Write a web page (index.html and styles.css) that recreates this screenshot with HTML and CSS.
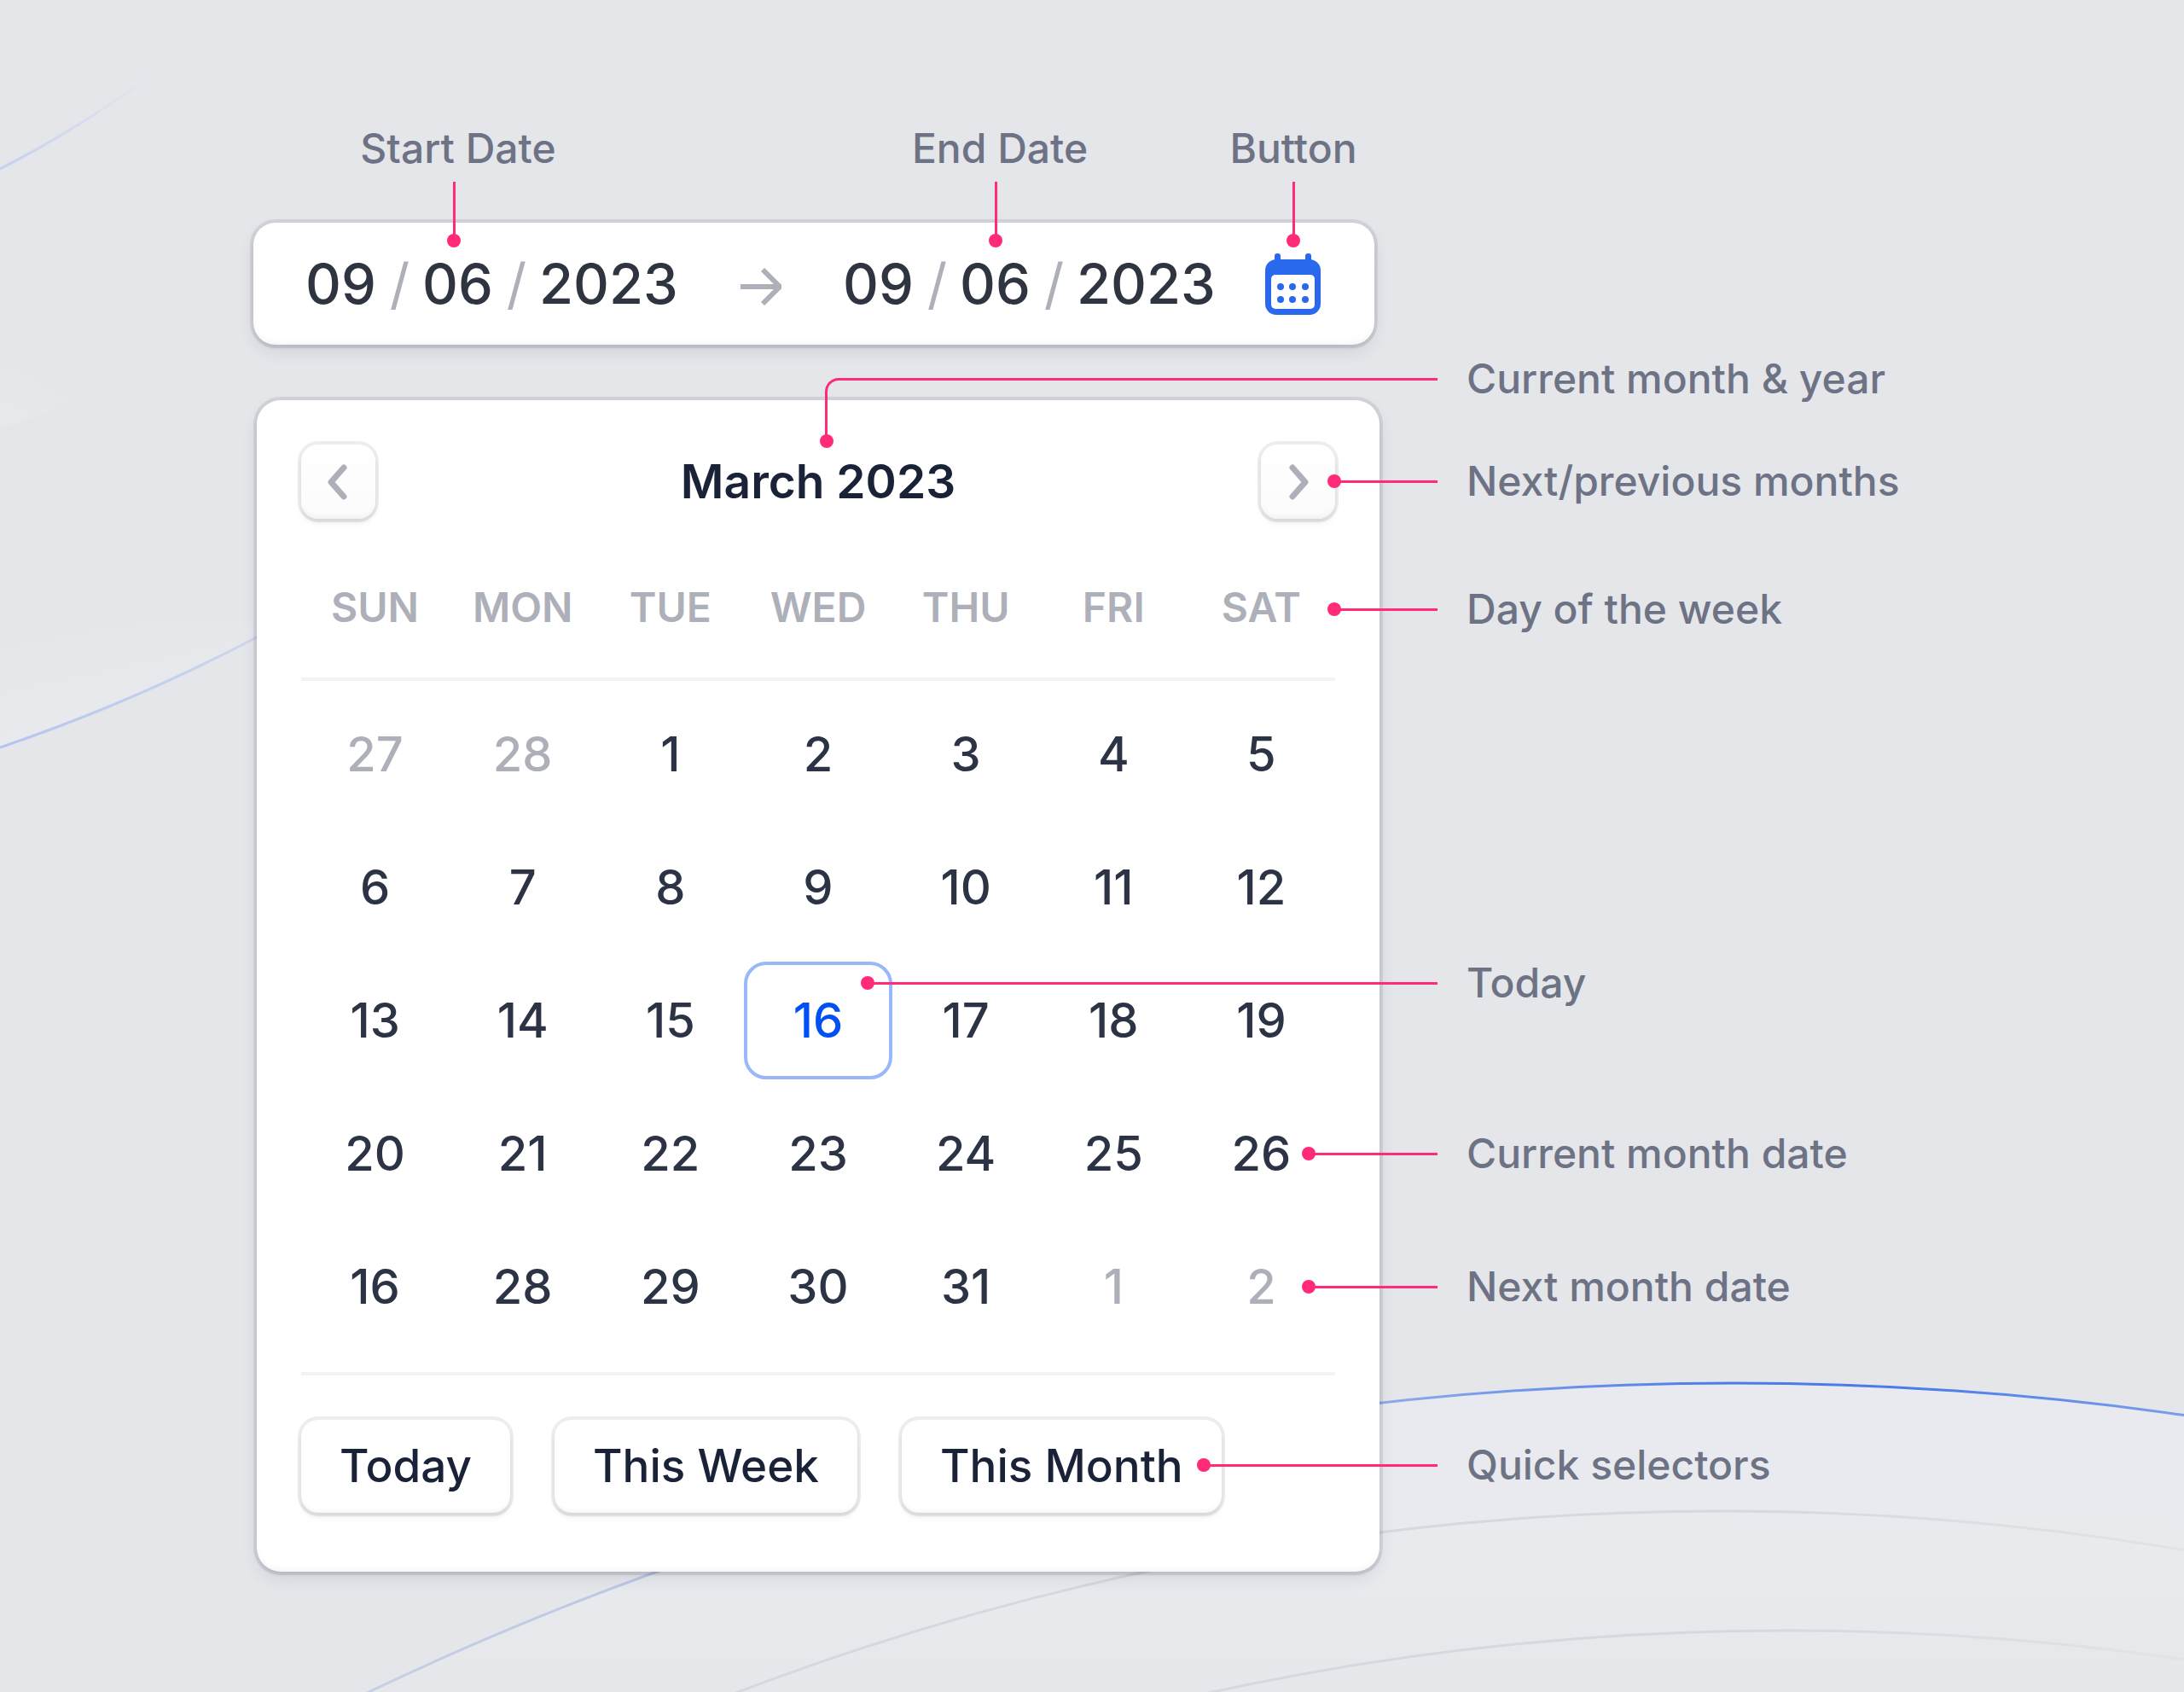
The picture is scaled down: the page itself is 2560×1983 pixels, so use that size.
FILE: index.html
```html
<!DOCTYPE html>
<html lang="en">
<head>
  <meta charset="UTF-8" />
  <meta name="viewport" content="width=device-width, initial-scale=1.0"/>
  <title>Date Range Picker Anatomy</title>
  <link rel="stylesheet" href="styles.css">
</head>
<body>
  <svg class="backdrop" viewBox="0 0 2560 1983" preserveAspectRatio="xMinYMin slice" aria-hidden="true">
    <defs>
      <linearGradient id="arcBlue" gradientUnits="userSpaceOnUse" x1="430" y1="0" x2="2560" y2="0">
        <stop offset="0" stop-color="#c6cfe4"/>
        <stop offset="0.3" stop-color="#b0bfe4"/>
        <stop offset="0.56" stop-color="#8daaea"/>
        <stop offset="0.75" stop-color="#4a7be8"/>
        <stop offset="0.85" stop-color="#4a7be8"/>
        <stop offset="1" stop-color="#7a9eec"/>
      </linearGradient>
      <linearGradient id="arcGrey" gradientUnits="userSpaceOnUse" x1="860" y1="0" x2="2560" y2="0">
        <stop offset="0" stop-color="#d6d8dd"/>
        <stop offset="0.7" stop-color="#d7d8dd"/>
        <stop offset="1" stop-color="#e2e3e7"/>
      </linearGradient>
      <linearGradient id="arcTop" gradientUnits="userSpaceOnUse" x1="0" y1="0" x2="175" y2="0">
        <stop offset="0" stop-color="#c3d0ee"/>
        <stop offset="1" stop-color="#e4e6ea"/>
      </linearGradient>
      <linearGradient id="arcLeft" gradientUnits="userSpaceOnUse" x1="0" y1="0" x2="310" y2="0">
        <stop offset="0" stop-color="#b3c5ee"/>
        <stop offset="1" stop-color="#ced7ec"/>
      </linearGradient>
      <linearGradient id="leftFill" gradientUnits="userSpaceOnUse" x1="60" y1="730" x2="90" y2="870">
        <stop offset="0" stop-color="#e4e6ea"/>
        <stop offset="1" stop-color="#e8eaee"/>
      </linearGradient>
      <linearGradient id="topFill" gradientUnits="userSpaceOnUse" x1="40" y1="430" x2="0" y2="500">
        <stop offset="0" stop-color="#e4e6ea"/>
        <stop offset="1" stop-color="#e7e9ec"/>
      </linearGradient>
    <linearGradient id="hillFill" gradientUnits="userSpaceOnUse" x1="0" y1="1620" x2="0" y2="1983">
        <stop offset="0" stop-color="#e8eaef"/>
        <stop offset="0.6" stop-color="#e8eaee"/>
        <stop offset="1" stop-color="#e6e7eb"/>
      </linearGradient>
    </defs>
    <path d="M0 430H145Q80 480 0 501Z" fill="url(#topFill)"/>
    <path d="M0 730H300V748Q160 824 0 877Z" fill="url(#leftFill)"/>
    <path d="M0 198Q90 152 175 90" fill="none" stroke="url(#arcTop)" stroke-width="3"/>
    <path d="M0 876Q160 822 310 742" fill="none" stroke="url(#arcLeft)" stroke-width="3"/>
    <circle cx="2033" cy="5341" r="3720" fill="url(#hillFill)" stroke="url(#arcBlue)" stroke-width="3"/>
    <circle cx="2018" cy="5011" r="3240" fill="none" stroke="url(#arcGrey)" stroke-width="3"/>
    <circle cx="2096" cy="5111" r="3200" fill="none" stroke="url(#arcGrey)" stroke-width="3"/>
  </svg>

  <main class="picker">
    <form class="range">
      <fieldset class="date">
        <input class="date-part" type="text" value="09" aria-label="Start day">
        <span class="slash">/</span>
        <input class="date-part" type="text" value="06" aria-label="Start month">
        <span class="slash">/</span>
        <input class="date-part date-year" type="text" value="2023" aria-label="Start year">
      </fieldset>
      <svg class="arrow" viewBox="0 0 48 44" aria-hidden="true">
        <path d="M0 22H44M26 2L46 22L26 42" fill="none" stroke="#adb0b8" stroke-width="6"/>
      </svg>
      <fieldset class="date">
        <input class="date-part" type="text" value="09" aria-label="End day">
        <span class="slash">/</span>
        <input class="date-part" type="text" value="06" aria-label="End month">
        <span class="slash">/</span>
        <input class="date-part date-year" type="text" value="2023" aria-label="End year">
      </fieldset>
      <button class="open-btn" type="button" aria-label="Open calendar">
        <svg viewBox="0 0 65 72" aria-hidden="true">
          <rect x="11" y="0" width="7" height="14" rx="3" fill="#2a68ee"/>
          <rect x="47" y="0" width="7" height="14" rx="3" fill="#2a68ee"/>
          <rect x="0" y="7" width="65" height="65" rx="13" fill="#2a68ee"/>
          <rect x="7" y="25" width="51" height="40" rx="5" fill="#fff"/>
          <g fill="#2a68ee">
            <circle cx="18" cy="39" r="4"/><circle cx="32" cy="39" r="4"/><circle cx="47" cy="39" r="4"/>
            <circle cx="18" cy="54" r="4"/><circle cx="32" cy="54" r="4"/><circle cx="47" cy="54" r="4"/>
          </g>
        </svg>
      </button>
      <div class="pin pin-start"><span>Start Date</span></div>
      <div class="pin pin-end"><span>End Date</span></div>
      <div class="pin pin-button"><span>Button</span></div>
    </form>

    <section class="calendar">
      <header class="month">
        <button class="nav-btn" type="button" aria-label="Previous month">
          <svg viewBox="0 0 24 40" aria-hidden="true"><path d="M18 3L3 20L18 37" /></svg>
        </button>
        <h1>March 2023</h1>
        <button class="nav-btn" type="button" aria-label="Next month">
          <svg viewBox="0 0 24 40" aria-hidden="true"><path d="M6 3L21 20L6 37" /></svg>
        </button>
        <div class="callout callout-month"><span>Current month &amp; year</span></div>
        <div class="callout callout-nav"><span>Next/previous months</span></div>
      </header>

      <table class="days">
        <thead>
          <tr>
            <th>SUN</th><th>MON</th><th>TUE</th><th>WED</th><th>THU</th><th>FRI</th>
            <th>SAT<div class="callout callout-week"><span>Day of the week</span></div></th>
          </tr>
        </thead>
        <tbody>
          <tr>
            <td><button class="day muted">27</button></td>
            <td><button class="day muted">28</button></td>
            <td><button class="day">1</button></td>
            <td><button class="day">2</button></td>
            <td><button class="day">3</button></td>
            <td><button class="day">4</button></td>
            <td><button class="day">5</button></td>
          </tr>
          <tr>
            <td><button class="day">6</button></td>
            <td><button class="day">7</button></td>
            <td><button class="day">8</button></td>
            <td><button class="day">9</button></td>
            <td><button class="day">10</button></td>
            <td><button class="day">11</button></td>
            <td><button class="day">12</button></td>
          </tr>
          <tr>
            <td><button class="day">13</button></td>
            <td><button class="day">14</button></td>
            <td><button class="day">15</button></td>
            <td><button class="day today">16</button></td>
            <td><button class="day">17</button></td>
            <td><button class="day">18</button></td>
            <td><button class="day">19</button><div class="callout callout-today"><span>Today</span></div></td>
          </tr>
          <tr>
            <td><button class="day">20</button></td>
            <td><button class="day">21</button></td>
            <td><button class="day">22</button></td>
            <td><button class="day">23</button></td>
            <td><button class="day">24</button></td>
            <td><button class="day">25</button></td>
            <td><button class="day">26</button><div class="callout callout-date"><span>Current month date</span></div></td>
          </tr>
          <tr>
            <td><button class="day">16</button></td>
            <td><button class="day">28</button></td>
            <td><button class="day">29</button></td>
            <td><button class="day">30</button></td>
            <td><button class="day">31</button></td>
            <td><button class="day muted">1</button></td>
            <td><button class="day muted">2</button><div class="callout callout-date"><span>Next month date</span></div></td>
          </tr>
        </tbody>
      </table>

      <footer class="quick">
        <button class="quick-btn" type="button">Today</button>
        <button class="quick-btn" type="button">This Week</button>
        <button class="quick-btn" type="button">This Month</button>
        <div class="callout callout-quick"><span>Quick selectors</span></div>
      </footer>
    </section>
  </main>
</body>
</html>
```
FILE: styles.css
```css
* {
  margin: 0;
  padding: 0;
  box-sizing: border-box;
  font-family: Inter, sans-serif;
}

body {
  position: relative;
  min-height: 100vh;
  background-color: #e4e6ea;
  overflow-x: hidden;
}

button, input, fieldset {
  border: none;
  background: none;
}

button {
  cursor: pointer;
}

.backdrop {
  position: absolute;
  top: 0;
  left: 0;
  width: 100%;
  height: 100%;
}

.picker {
  position: relative;
  max-width: 1620px;
  padding: 261px 0 100px 297px;
}

/* date range field */
.range {
  position: relative;
  display: flex;
  align-items: center;
  height: 143px;
  margin-right: 9px;
  padding: 0 63px 0 61px;
  border-radius: 26px;
  background: #fff;
  box-shadow: 0 0 0 4px rgba(30, 35, 60, 0.09), 0 4px 4px rgba(30, 35, 60, 0.07), 0 8px 20px rgba(30, 35, 60, 0.09), inset 0 -6px 8px -4px rgba(0, 0, 0, 0.05);
}

.date {
  display: flex;
  align-items: center;
}

.date-part {
  width: 84px;
  font-size: 65px;
  font-weight: 500;
  line-height: 80px;
  color: #2f3441;
}

.date-year {
  width: 164px;
}

.slash {
  width: 53px;
  font-size: 65px;
  line-height: 80px;
  text-align: center;
  color: #adb0b8;
}

.arrow {
  width: 48px;
  height: 44px;
  margin: 6px 72px 0;
}

.open-btn {
  width: 65px;
  height: 72px;
  margin-left: auto;
}

.open-btn svg {
  display: block;
}

/* calendar card */
.calendar {
  margin: 65px 3px 0 4px;
  padding: 52px 52px 69px;
  border-radius: 28px;
  background: #fff;
  box-shadow: 0 0 0 4px rgba(30, 35, 60, 0.09), 0 4px 4px rgba(30, 35, 60, 0.07), 0 8px 20px rgba(30, 35, 60, 0.09), inset 0 -6px 8px -4px rgba(0, 0, 0, 0.05);
}

.month {
  position: relative;
  display: flex;
  align-items: center;
  justify-content: space-between;
}

.month h1 {
  padding-bottom: 2px;
  font-size: 55px;
  font-weight: 600;
  line-height: 68px;
  color: #1a2238;
}

.nav-btn {
  display: flex;
  align-items: center;
  justify-content: center;
  width: 87px;
  height: 87px;
  border-radius: 20px;
  background: linear-gradient(#fff, #fbfbfb);
  box-shadow: 0 0 0 4px rgba(20, 25, 35, 0.08), 0 4px 4px rgba(0, 0, 0, 0.06), 0 6px 10px rgba(0, 0, 0, 0.04), inset 0 -5px 6px -4px rgba(0, 0, 0, 0.06);
}

.nav-btn svg {
  width: 24px;
  height: 40px;
  overflow: visible;
  fill: none;
  stroke: #adb0b8;
  stroke-width: 7px;
  stroke-linecap: round;
  stroke-linejoin: round;
}

.days {
  width: 100%;
  table-layout: fixed;
  border-collapse: separate;
  border-spacing: 0;
}

.days tr {
  position: relative;
}

.days th {
  height: 190px;
  padding-bottom: 52px;
  border-bottom: 4px solid #f3f3f4;
  font-size: 48px;
  font-weight: 600;
  line-height: 60px;
  vertical-align: bottom;
  color: #adb0b8;
}

.days td {
  height: 156px;
  text-align: center;
}

.days tbody tr:first-child td {
  height: 164px;
  padding-top: 8px;
}

.days tbody tr:last-child td {
  height: 182px;
  padding-bottom: 22px;
  border-bottom: 4px solid #f3f3f4;
}

.day {
  width: 100%;
  height: 138px;
  border: 4px solid transparent;
  border-radius: 26px;
  font-size: 56px;
  font-weight: 500;
  color: #2b3345;
}

.day.muted {
  color: #adb0b8;
}

.day.today {
  border-color: #99b8fb;
  color: #0050f5;
}

.quick {
  position: relative;
  display: flex;
  gap: 52px;
  padding-top: 52px;
}

.quick-btn {
  height: 109px;
  padding: 0 45px 2px;
  border-radius: 20px;
  background: #fff;
  box-shadow: 0 0 0 4px rgba(20, 25, 35, 0.08), 0 4px 4px rgba(0, 0, 0, 0.06), 0 6px 10px rgba(0, 0, 0, 0.04), inset 0 -5px 6px -4px rgba(0, 0, 0, 0.06);
  font-size: 53px;
  font-weight: 500;
  color: #1a2238;
}

/* annotations to the right: --reach is how far the dot sits inside the card */
.callout {
  --reach: 1px;
  position: absolute;
  z-index: 1;
  left: calc(100% - var(--reach));
  top: 50%;
  height: 60px;
  margin-top: -31px;
  padding-left: calc(var(--reach) + 154px);
  white-space: nowrap;
}

.callout span, .pin span {
  display: block;
  font-size: 48px;
  font-weight: 500;
  line-height: 60px;
  text-align: left;
  color: #6d7385;
}

.callout::before {
  content: "";
  position: absolute;
  top: 29px;
  left: 0;
  box-sizing: border-box;
  width: calc(var(--reach) + 120px);
  height: 3px;
  background: #ff2a78;
}

.callout::after {
  content: "";
  position: absolute;
  top: 22px;
  left: -8px;
  width: 16px;
  height: 16px;
  border-radius: 50%;
  background: #ff2a78;
}

.callout-month {
  --reach: 598px;
  top: -76px;
}

.callout-month::before {
  height: 75px;
  border: solid #ff2a78;
  border-width: 3px 0 0 3px;
  border-radius: 16px 0 0 0;
  background: none;
}

.callout-month::after {
  top: 95px;
  left: -6px;
}

.callout-week {
  top: 107px;
}

.callout-today {
  --reach: 548px;
  top: 35px;
}

.callout-date {
  --reach: 31px;
  top: 79px;
}

.callout-quick {
  --reach: 154px;
  top: 106px;
}

/* annotations above the range field */
.pin {
  position: absolute;
  z-index: 1;
  bottom: 114px;
  display: flex;
  flex-direction: column;
  align-items: center;
  width: 260px;
  margin-left: -130px;
}

.pin::before {
  content: "";
  order: 1;
  width: 3px;
  height: 64px;
  margin-top: 9px;
  background: #ff2a78;
}

.pin::after {
  content: "";
  order: 2;
  width: 16px;
  height: 16px;
  margin-top: -3px;
  border-radius: 50%;
  background: #ff2a78;
}

.pin-start {
  left: 235px;
}

.pin-end {
  left: 870px;
}

.pin-button {
  left: 1219px;
}

.pin-start span, .pin-end span {
  margin-left: 10px;
}
```
